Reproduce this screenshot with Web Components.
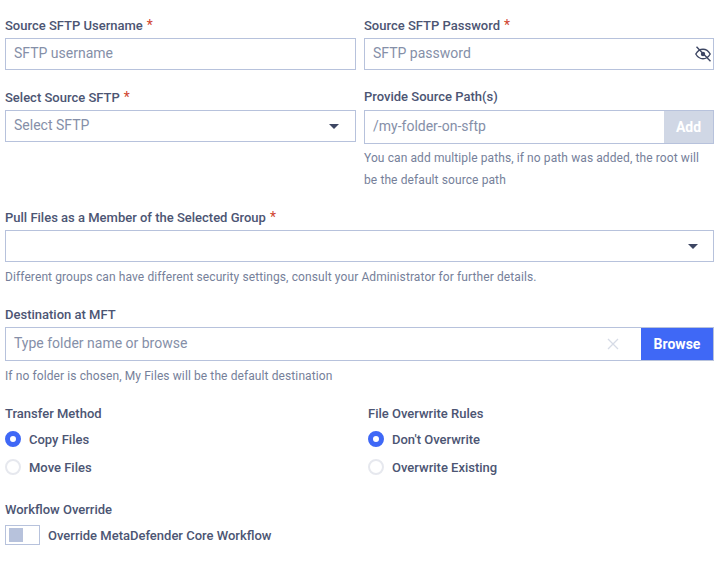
<!DOCTYPE html>
<html>
<head>
<meta charset="utf-8">
<style>
html,body{margin:0;background:#fff;font-family:Roboto,"Liberation Sans",sans-serif;color:#4c5573}
</style>
</head>
<body>
<transfer-form></transfer-form>
<script>
class FieldLabel extends HTMLElement{
    constructor(){
        super()
        this.attachShadow({mode:'open'})
    }
    connectedCallback(){
        const req = this.hasAttribute('required') ? '<span class="req">*</span>' : ''
        this.shadowRoot.innerHTML = `
        <style>
            :host{display:block;font-size:13px;font-weight:500;line-height:20px;height:20px;color:#4c5573;white-space:nowrap}
            .req{color:#d0452f;font-size:14px;margin-left:4px;font-weight:400}
        </style>
        <slot></slot>${req}`
    }
}
customElements.define('field-label',FieldLabel)

class HelpText extends HTMLElement{
    constructor(){
        super()
        this.attachShadow({mode:'open'})
    }
    connectedCallback(){
        this.shadowRoot.innerHTML = `
        <style>
            :host{display:block;font-size:12px;line-height:22px;color:#767f9a;letter-spacing:.1px}
        </style>
        <slot></slot>`
    }
}
customElements.define('help-text',HelpText)

class TextBox extends HTMLElement{
    constructor(){
        super()
        this.attachShadow({mode:'open'})
    }
    connectedCallback(){
        this.shadowRoot.innerHTML = `
        <style>
            :host{display:flex;align-items:center;box-sizing:border-box;height:var(--h,32px);border:1px solid #b7c2dc;background:#fff;font-size:14px;color:#858fa8}
            .ph{flex:1;padding:0 0 2px 8px;white-space:nowrap}
        </style>
        <div class="ph">${this.getAttribute('placeholder')||''}</div>
        <slot></slot>`
    }
}
customElements.define('text-box',TextBox)

class Caret extends HTMLElement{
    constructor(){
        super()
        this.attachShadow({mode:'open'})
    }
    connectedCallback(){
        this.shadowRoot.innerHTML = `
        <style>
            :host{display:block;width:10px;height:5px;margin-right:16px}
            svg{display:block}
        </style>
        <svg width="10" height="5" viewBox="0 0 10 5"><path d="M0 0h10L5 5z" fill="#3d4663"/></svg>`
    }
}
customElements.define('select-caret',Caret)

class EyeOff extends HTMLElement{
    constructor(){
        super()
        this.attachShadow({mode:'open'})
    }
    connectedCallback(){
        this.shadowRoot.innerHTML = `
        <style>
            :host{display:block;width:16px;height:16px;margin-right:2px}
            svg{display:block}
        </style>
        <svg width="16" height="16" viewBox="0 0 16 16" fill="none" stroke="#3d4663" stroke-width="1.400">
            <path d="M.8 8C2.600 4.800 5 3.200 8 3.200s5.400 1.600 7.200 4.800C13.400 11.200 11 12.800 8 12.800S2.600 11.200.8 8z"/>
            <circle cx="8" cy="8" r="2.200" fill="#3d4663" stroke="none"/>
            <path d="M1.500.8l14 14.400"/>
        </svg>`
    }
}
customElements.define('eye-off',EyeOff)

class RadioItem extends HTMLElement{
    constructor(){
        super()
        this.attachShadow({mode:'open'})
    }
    connectedCallback(){
        this.shadowRoot.innerHTML = `
        <style>
            :host{display:flex;align-items:center;gap:8px;height:28px;font-size:13px;font-weight:500;color:#4c5573}
            .dot{box-sizing:border-box;width:16px;height:16px;border-radius:50%;border:2px solid #e6e8ee;background:#fff}
            :host([checked]) .dot{border:5px solid #3f68f6}
        </style>
        <span class="dot"></span><slot></slot>`
    }
}
customElements.define('radio-item',RadioItem)

class SwitchRow extends HTMLElement{
    constructor(){
        super()
        this.attachShadow({mode:'open'})
    }
    connectedCallback(){
        this.shadowRoot.innerHTML = `
        <style>
            :host{display:flex;align-items:center;gap:8px;font-size:13px;font-weight:500;color:#4c5573}
            .track{box-sizing:border-box;width:35px;height:20px;border:1px solid #b7c2dc;padding:2px 3px;display:flex}
            .knob{width:14px;background:#b7c2dc}
        </style>
        <span class="track"><span class="knob"></span></span><slot></slot>`
    }
}
customElements.define('switch-row',SwitchRow)

class TransferForm extends HTMLElement{
    constructor(){
        super()
        this.attachShadow({mode:'open'})
    }
    connectedCallback(){
        this.shadowRoot.innerHTML = `
        <style>
            :host{display:block;padding:15px 7px 0 5px}
            .two{display:grid;grid-template-columns:351px 350px;column-gap:8px}
            .two.radios{grid-template-columns:363px 1fr;column-gap:0}
            .btn{align-self:stretch;display:flex;align-items:center;justify-content:center;font-size:14px;font-weight:700;color:#fff}
            .add{width:49px;background:#d0d7e5}
            .browse{width:72px;background:#3f68f6}
            .x{width:12px;height:12px;margin-right:22px}
            .x svg{display:block}
            field-label{margin-bottom:3px}
            .radios field-label{margin-bottom:1px}
            .dest field-label{margin-bottom:2px}
            .flow field-label{margin-bottom:5px}
        </style>
        <div class="two">
            <div>
                <field-label required>Source SFTP Username</field-label>
                <text-box placeholder="SFTP username"></text-box>
            </div>
            <div>
                <field-label required>Source SFTP Password</field-label>
                <text-box placeholder="SFTP password"><eye-off></eye-off></text-box>
            </div>
        </div>
        <div class="two" style="margin-top:17px">
            <div>
                <field-label required>Select Source SFTP</field-label>
                <text-box placeholder="Select SFTP"><select-caret></select-caret></text-box>
            </div>
            <div>
                <field-label>Provide Source Path(s)</field-label>
                <text-box placeholder="/my-folder-on-sftp" style="--h:34px"><div class="btn add">Add</div></text-box>
                <help-text style="margin-top:3px">You can add multiple paths, if no path was added, the root will be the default source path</help-text>
            </div>
        </div>
        <div style="margin-top:16px">
            <field-label required>Pull Files as a Member of the Selected Group</field-label>
            <text-box><select-caret style="margin-right:15px"></select-caret></text-box>
            <help-text style="margin-top:4px">Different groups can have different security settings, consult your Administrator for further details.</help-text>
        </div>
        <div class="dest" style="margin-top:17px">
            <field-label>Destination at MFT</field-label>
            <text-box placeholder="Type folder name or browse" style="--h:34px">
                <div class="x"><svg width="12" height="12" viewBox="0 0 12 12"><path d="M1 1l10 10M11 1L1 11" stroke="#d6dbe6" stroke-width="1.300"/></svg></div>
                <div class="btn browse">Browse</div>
            </text-box>
            <help-text style="margin-top:4px">If no folder is chosen, My Files will be the default destination</help-text>
        </div>
        <div class="two radios" style="margin-top:17px">
            <div>
                <field-label>Transfer Method</field-label>
                <radio-item checked>Copy Files</radio-item>
                <radio-item>Move Files</radio-item>
            </div>
            <div>
                <field-label>File Overwrite Rules</field-label>
                <radio-item checked>Don't Overwrite</radio-item>
                <radio-item>Overwrite Existing</radio-item>
            </div>
        </div>
        <div class="flow" style="margin-top:19px">
            <field-label>Workflow Override</field-label>
            <switch-row>Override MetaDefender Core Workflow</switch-row>
        </div>`
    }
}
customElements.define('transfer-form',TransferForm)
</script>
</body>
</html>
